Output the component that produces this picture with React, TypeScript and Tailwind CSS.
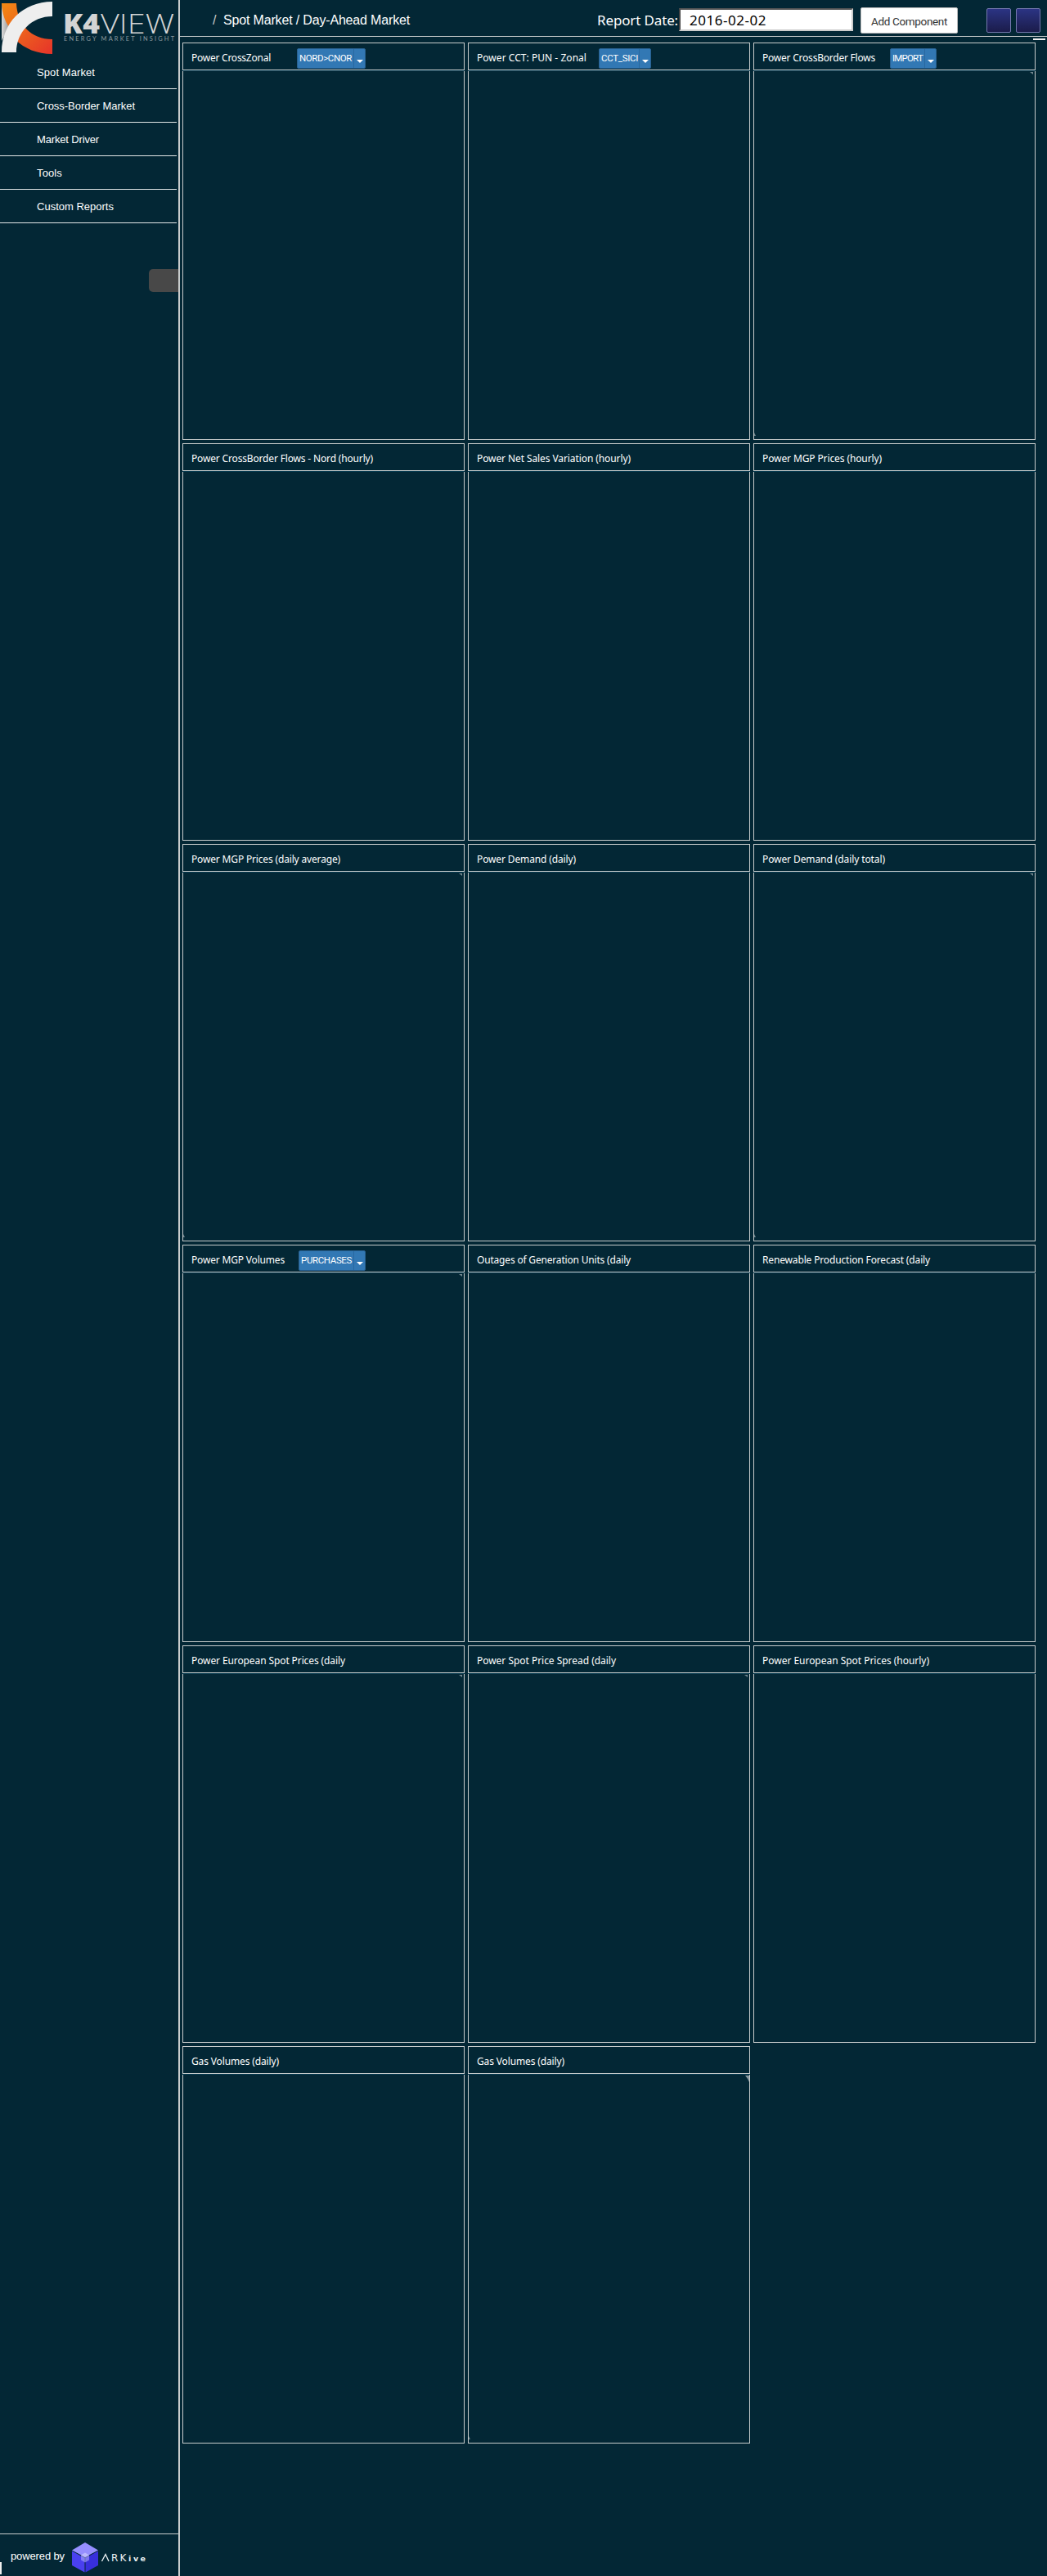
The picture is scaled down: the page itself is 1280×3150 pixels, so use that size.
import React from "react";

type Card = { title: string; width: number; select?: string; selectX?: number; selectW?: number; textW?: number; corner?: "small" | "large"; foot?: boolean };

const cards: Card[] = [
  { title: "Power CrossZonal", width: 97, select: "NORD>CNOR", selectX: 139, selectW: 84, textW: 64 },
  { title: "Power CCT: PUN - Zonal", width: 134, select: "CCT_SICI", selectX: 159, selectW: 64, textW: 45 },
  { title: "Power CrossBorder Flows", width: 138, select: "IMPORT", selectX: 166, selectW: 57, textW: 37, corner: "small", foot: true },
  { title: "Power CrossBorder Flows - Nord (hourly)", width: 222 },
  { title: "Power Net Sales Variation (hourly)", width: 188 },
  { title: "Power MGP Prices (hourly)", width: 146 },
  { title: "Power MGP Prices (daily average)", width: 182, foot: true, corner: "small" },
  { title: "Power Demand (daily)", width: 121 },
  { title: "Power Demand (daily total)", width: 150, corner: "small", foot: true },
  { title: "Power MGP Volumes", width: 114, select: "PURCHASES", selectX: 141, selectW: 82, textW: 62, corner: "small" },
  { title: "Outages of Generation Units (daily", width: 188 },
  { title: "Renewable Production Forecast (daily", width: 205 },
  { title: "Power European Spot Prices (daily", width: 188, corner: "small" },
  { title: "Power Spot Price Spread (daily", width: 170, corner: "small" },
  { title: "Power European Spot Prices (hourly)", width: 204 },
  { title: "Gas Volumes (daily)", width: 107 },
  { title: "Gas Volumes (daily)", width: 107, corner: "large", foot: true },
];

const menu: [string, number][] = [
  ["Spot Market", 71],
  ["Cross-Border Market", 120],
  ["Market Driver", 76],
  ["Tools", 31],
  ["Custom Reports", 94],
];

/* One line of text tracked out or in to a set width. */
function Fit({ children, width, className = "" }: { children: string; width: number; className?: string }) {
  const ref = React.useRef<HTMLSpanElement>(null);
  React.useLayoutEffect(() => {
    const el = ref.current;
    if (!el) return;
    el.style.letterSpacing = "0px";
    el.style.letterSpacing = `${(width - el.getBoundingClientRect().width) / children.length}px`;
  }, [width, children]);
  return <span ref={ref} className={`inline-block whitespace-pre ${className}`}>{children}</span>;
}

function Dropdown({ card }: { card: Card }) {
  return (
    <div
      className="absolute top-[6px] flex h-[25px] rounded-[2px] border border-[#286090] bg-[#3278b4] font-['Roboto'] text-[11.5px] leading-[23px] text-white"
      style={{ left: card.selectX, width: card.selectW }}
    >
      <div className="flex-1 pl-[2px]"><Fit width={card.textW!}>{card.select!}</Fit></div>
      <div className="flex w-[14px] items-center justify-center border-l border-[#2868a0] pt-[6px]">
        <svg width="8" height="4" viewBox="0 0 8 4"><path d="M0 0h8L4 4z" fill="#fff" /></svg>
      </div>
    </div>
  );
}

function Panel({ card }: { card: Card }) {
  return (
    <section className="flex h-[486px] flex-col">
      <div className="relative h-[34px] border border-[#c8cccc] pl-[10px] font-['Noto_Sans'] text-[12px] leading-[36px] text-white">
        <Fit width={card.width}>{card.title}</Fit>
        {card.select && <Dropdown card={card} />}
      </div>
      <div className="h-px bg-[#063a50]" />
      <div className="relative flex-1 border border-t-0 border-[#c8cccc]">
        {card.corner === "small" && (
          <svg className="absolute right-[2px] top-[1px]" width="4" height="3"><path d="M0 0h4v3z" fill="#71868f" /></svg>
        )}
        {card.corner === "large" && (
          <svg className="absolute right-0 top-[1px]" width="5" height="8"><path d="M0 0h5v8L3 4z" fill="#87979e" /></svg>
        )}
        {card.foot && (
          <svg className="absolute bottom-[4px] left-0" width="2" height="4"><path d="M0 0l2 4H0z" fill="#71868f" /></svg>
        )}
      </div>
    </section>
  );
}

function Logo() {
  return (
    <svg width="216" height="68" viewBox="0 0 216 68" className="block">
      <defs>
        <linearGradient id="flame" x1="0" y1="0" x2="1" y2="1">
          <stop stopColor="#f28a13" /><stop offset="1" stopColor="#e6332a" />
        </linearGradient>
        <linearGradient id="steel" x1="0" y1="0" x2="1" y2="0">
          <stop stopColor="#d9d9d9" /><stop offset="1" stopColor="#999" />
        </linearGradient>
      </defs>
      <path d="M2 4H20C21 30 38 48 64 48V66C27 66 2 40 2 4z" fill="url(#flame)" />
      <path d="M2 6C3 17 6 26 11 33L2 50z" fill="url(#steel)" />
      <path d="M2 64C2 28 28 2 64 2V20C39 20 20 39 20 64z" fill="#eee" />
      <text x="77" y="41" fontFamily="Open Sans" fontWeight="800" fontSize="33" textLength="45" lengthAdjust="spacingAndGlyphs" fill="#d3d4d4">K4</text>
      <text x="123" y="41" fontFamily="Open Sans" fontWeight="300" fontSize="33.5" textLength="90" lengthAdjust="spacingAndGlyphs" fill="#d3d4d4">VIEW</text>
      <text x="78" y="49.5" fontFamily="Lato" fontSize="7.4" textLength="135" fill="#8b989e">ENERGY MARKET INSIGHT</text>
    </svg>
  );
}

function ArkiveLogo() {
  return (
    <svg width="92" height="38" viewBox="0 0 92 38">
      <path d="M16 0L32 9.5 16 18 0 9.5z" fill="#968fff" />
      <path d="M0 10.5L15.5 19v17.5L0 28z" fill="#4a40ef" />
      <path d="M32 10.5L16.5 19v17.5L32 28z" fill="#382fdc" />
      <path d="M16 12.5l5 3v6l-5 3-5-3v-6z" fill="#aaa5ff" opacity=".6" />
      <path d="M16 12.5l5 3-5 2.5-5-2.5z" fill="#c8c4ff" opacity=".7" />
      <path d="M36.5 23L41 14.5 45 23" fill="none" stroke="#eef2f4" strokeWidth="1.3" />
      <text x="48 58.5" y="23" fontFamily="DejaVu Sans" fontSize="12" fill="#eef2f4">RK</text>
      <text x="69 75 83.5" y="23" fontFamily="DejaVu Sans" fontWeight="700" fontSize="9.5" fill="#eef2f4">ive</text>
    </svg>
  );
}

export default function App() {
  return (
    <div className="flex h-[3150px] w-[1280px] overflow-hidden bg-[#032735] font-['Liberation_Sans'] text-white">
      <aside className="flex w-[220px] flex-col border-r-2 border-[#c8cccc]">
        <div className="h-[68px]"><Logo /></div>
        <nav className="w-[216px]">
          {menu.map(([label, width]) => (
            <div key={label} className="h-[41px] border-b border-[#e4e8e8] pl-[45px] text-[13px] leading-[41px]">
              <Fit width={width}>{label}</Fit>
            </div>
          ))}
        </nav>
        <div className="mt-[56px] h-[28px] w-[36px] self-end rounded-l-[5px] bg-[#484848]" />
        <footer className="relative mt-auto flex h-[52px] border-t border-[#c8cccc] pl-[13px]">
          <span className="pt-[18px] text-[13px] leading-[18px]"><Fit width={66}>powered by</Fit></span>
          <div className="ml-[9px] pt-[10px]"><ArkiveLogo /></div>
          <div className="absolute bottom-[2px] left-0 h-[15px] w-[2px] bg-[#eee]" />
        </footer>
      </aside>
      <div className="w-[1060px]">
        <header className="relative flex h-[45px] border-b border-[#c8cccc] text-[16px]">
          <span className="ml-[40px] w-[13px] leading-[49px] text-[#c8cccc]">/</span>
          <span className="w-[456px] leading-[49px]"><Fit width={228}>Spot Market / Day-Ahead Market</Fit></span>
          <span className="ml-[1px] w-[100px] font-['Noto_Sans'] text-[17px] leading-[49px]"><Fit width={99}>Report Date:</Fit></span>
          <div className="mt-[10px] h-[28px] w-[213px] border-2 border-b-[#ccc] border-l-[#444] border-r-[#ccc] border-t-[#555] bg-white pl-[11px] font-['Noto_Sans'] text-[17px] leading-[25px] text-black">
            <Fit width={94}>2016-02-02</Fit>
          </div>
          <div className="ml-[9px] mt-[9px] h-[32px] w-[119px] rounded-[2px] border border-[#bbb] bg-white pl-[12px] font-['Roboto'] text-[13.5px] leading-[32px] text-[#333]">
            <Fit width={93}>Add Component</Fit>
          </div>
          <div className="ml-[35px] mt-[10px] h-[30px] w-[30px] rounded-[2px] border border-[#7478ae] bg-linear-to-b from-[#2b3484] to-[#1b1c4b]" />
          <div className="ml-[6px] mt-[10px] h-[30px] w-[30px] rounded-[2px] border border-[#7478ae] bg-linear-to-b from-[#2b3484] to-[#1b1c4b]" />
          <div className="absolute left-[1043px] top-[47px] h-[2px] w-[15px] bg-[#eee]" />
        </header>
        <main className="ml-[3px] mt-[7px] grid w-[1043px] grid-cols-3 gap-[4px]">
          {cards.map((card, i) => <Panel key={i} card={card} />)}
        </main>
      </div>
    </div>
  );
}
